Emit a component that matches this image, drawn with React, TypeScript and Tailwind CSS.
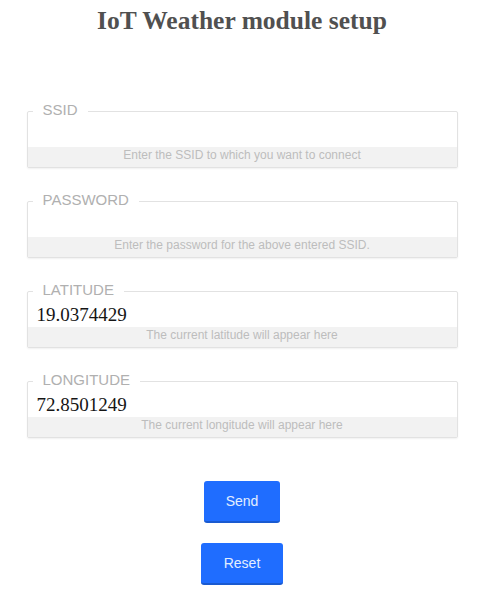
import React from "react";

type Field = { label: string; value: string; help: string };

const fields: Field[] = [
  { label: "SSID", value: "", help: "Enter the SSID to which you want to connect" },
  { label: "PASSWORD", value: "", help: "Enter the password for the above entered SSID." },
  { label: "LATITUDE", value: "19.0374429", help: "The current latitude will appear here" },
  { label: "LONGITUDE", value: "72.8501249", help: "The current longitude will appear here" },
];

function FieldBox({ f }: { f: Field }) {
  return (
    <div className="relative w-[431px] mx-auto border border-[#e2e2e2] rounded-[2px] shadow-[0_1px_2px_rgba(0,0,0,0.06)] bg-white">
      <div className="absolute top-[-11px] left-[5px] bg-white px-[10px] text-[15px] leading-[18px] text-[#b0b0b0] font-['Liberation_Sans',Arial,sans-serif]">
        {f.label}
      </div>
      <div className="h-[35px] pt-[12px] pl-[9px] text-[19px] leading-[22px] text-[#151515] font-['Liberation_Serif','Times_New_Roman',serif]">
        {f.value}
      </div>
      <div className="h-[20px] bg-[#f2f2f2] text-center text-[12px] leading-[17px] text-[#bdbdbd] font-['Liberation_Sans',Arial,sans-serif]">
        {f.help}
      </div>
    </div>
  );
}

export default function App() {
  return (
    <div className="w-[484px] bg-white min-h-[600px]">
      <h1 className="pt-[6px] text-center text-[25.5px] leading-[30px] font-bold text-[#505050] font-['Liberation_Serif','Times_New_Roman',serif]">
        IoT Weather module setup
      </h1>
      <div className="mt-[75px] flex flex-col gap-[33px]">
        {fields.map((f) => (
          <FieldBox key={f.label} f={f} />
        ))}
      </div>
      <div className="mt-[43px] flex flex-col items-center gap-[20px]">
        <button className="h-[42px] px-[22px] rounded-[3px] bg-[#1f6dff] border-b-2 border-[#1a5ad0] text-[14px] text-[#e3eeff] font-['Liberation_Sans',Arial,sans-serif]">
          Send
        </button>
        <button className="h-[42px] px-[23px] rounded-[3px] bg-[#1f6dff] border-b-2 border-[#1a5ad0] text-[14px] text-[#e3eeff] font-['Liberation_Sans',Arial,sans-serif]">
          Reset
        </button>
      </div>
    </div>
  );
}
